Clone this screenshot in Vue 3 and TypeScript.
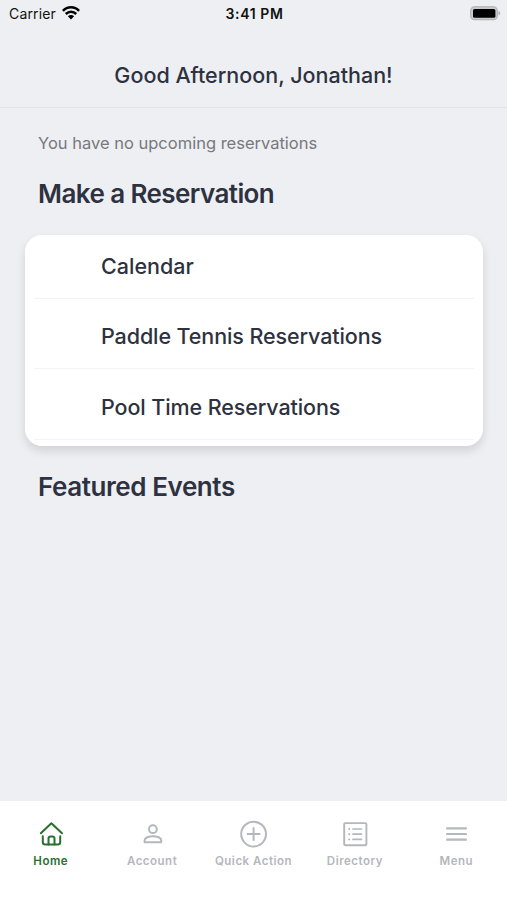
<script setup lang="ts">
type IconName = 'home' | 'account' | 'action' | 'directory' | 'menu'

interface Tab {
  label: string
  icon: IconName
}

const reservations: string[] = ['Calendar', 'Paddle Tennis Reservations', 'Pool Time Reservations']

const tabs: Tab[] = [
  { label: 'Home', icon: 'home' },
  { label: 'Account', icon: 'account' },
  { label: 'Quick Action', icon: 'action' },
  { label: 'Directory', icon: 'directory' },
  { label: 'Menu', icon: 'menu' },
]

const activeTab = 'Home'
</script>

<template>
  <div class="screen">
    <div class="status">
      <div class="carrier">
        <span>Carrier</span>
        <svg class="wifi" width="18" height="14" viewBox="0 0 18 14" fill="none" stroke="#000" stroke-width="2.5">
          <path d="M0.9 4.9C5.4.1 12.6.1 17.1 4.9" />
          <path d="M3.8 8C6.8 5 11.2 5 14.2 8" />
          <path d="M9 13.4L5.9 10.3C7.6 8.6 10.4 8.6 12.1 10.3Z" fill="#000" stroke="none" />
        </svg>
      </div>
      <span class="clock">3:41 PM</span>
      <svg class="battery" width="31" height="15" viewBox="0 0 31 15">
        <rect x="0.7" y="0.8" width="26.6" height="13" rx="3.8" fill="#c9cacb" stroke="#afb0b2" stroke-width="1.1" />
        <rect x="3" y="3" width="22.4" height="8.8" rx="1.6" fill="#000" />
        <path d="M28.5 5.1C30.7 5.7 30.7 8.9 28.5 9.5Z" fill="#afb0b2" />
      </svg>
    </div>

    <header class="header">
      <h1>Good Afternoon, Jonathan!</h1>
    </header>

    <main class="content">
      <p class="notice">You have no upcoming reservations</p>
      <h2 class="reserve-title">Make a Reservation</h2>
      <ul class="card">
        <li v-for="item in reservations" :key="item"><span>{{ item }}</span></li>
      </ul>
      <h2>Featured Events</h2>
    </main>

    <nav class="tabs">
      <a v-for="tab in tabs" :key="tab.label" class="tab" :class="{ active: tab.label === activeTab }">
        <svg width="28" height="28" viewBox="0 0 28 28" fill="none" stroke="currentColor" stroke-width="2" stroke-linecap="round" stroke-linejoin="round">
          <g v-if="tab.icon === 'home'">
            <path d="M3.8 13.3L14.4 3.3L25 13.3" />
            <path d="M5.8 16.2V22.3Q5.8 24.6 8.1 24.6H20.9Q23.2 24.6 23.2 22.3V16.2" />
            <path d="M11.5 24.6V18.7Q11.5 16.4 13.8 16.4H15.2Q17.5 16.4 17.5 18.7V24.6" />
          </g>
          <g v-else-if="tab.icon === 'account'">
            <circle cx="14.9" cy="9.2" r="3.9" />
            <path d="M6.6 22.2V20.3C6.6 17.7 10.7 16.2 14.9 16.2S23.2 17.7 23.2 20.3V22.2Z" />
          </g>
          <g v-else-if="tab.icon === 'action'">
            <circle cx="14.6" cy="14.1" r="12.4" />
            <path d="M8.6 14.1H20.6M14.6 8.1V20.1" />
          </g>
          <g v-else-if="tab.icon === 'directory'" stroke-width="1.9">
            <rect x="3.2" y="3.1" width="22.2" height="22.2" rx="1" />
            <path d="M12 9H20.5M12 14.2H20.5M12 19.4H20.5" stroke-width="1.7" />
            <path d="M8.1 9H8.3M8.1 14.2H8.3M8.1 19.4H8.3" />
          </g>
          <g v-else stroke-width="2.1" stroke-linecap="butt">
            <path d="M4.2 8.4H24.8M4.2 14H24.8M4.2 19.6H24.8" />
          </g>
        </svg>
        <span>{{ tab.label }}</span>
      </a>
    </nav>
  </div>
</template>

<style>
body {
  margin: 0;
}
</style>

<style scoped>
.screen {
  box-sizing: border-box;
  display: flex;
  flex-direction: column;
  height: 900px;
  overflow: hidden;
  background: #edeff3;
  color: #2e3240;
  font-family: Inter, "Liberation Sans", sans-serif;
}
.status {
  box-sizing: border-box;
  display: grid;
  grid-template-columns: 1fr auto 1fr;
  align-items: center;
  height: 28px;
  padding: 0 6px 2px 9px;
  color: #111;
  font-size: 14px;
}
.carrier {
  display: flex;
  align-items: center;
  gap: 6px;
  letter-spacing: 0.15px;
}
.wifi {
  margin-top: -1px;
}
.clock {
  padding-right: 1px;
  font-weight: 600;
  letter-spacing: 0.6px;
}
.battery {
  justify-self: end;
}
.header {
  box-sizing: border-box;
  height: 80px;
  padding-top: 31px;
  border-bottom: 1px solid #e2e4e7;
  text-align: center;
}
h1,
h2,
p,
ul {
  margin: 0;
  padding: 0;
}
h1 {
  font-size: 21.5px;
  line-height: 32px;
  font-weight: 500;
}
.content {
  flex: 1;
  padding: 23px 24px 0 25px;
}
.notice {
  padding-left: 13px;
  color: #77797c;
  font-size: 16.5px;
  line-height: 24px;
}
h2 {
  padding-left: 13px;
  font-size: 26px;
  line-height: 36px;
  font-weight: 600;
  letter-spacing: -0.42px;
}
.reserve-title {
  margin: 21px 0 23px;
  letter-spacing: -0.58px;
}
.card {
  box-sizing: border-box;
  height: 210.5px;
  margin-bottom: 23.5px;
  padding: 0 9px;
  border-radius: 17px;
  background: #fff;
  box-shadow: 0 5px 10px rgba(0, 0, 0, 0.12);
  list-style: none;
}
.card li {
  box-sizing: border-box;
  display: flex;
  align-items: center;
  height: 70.4px;
  padding: 5px 0 0 67px;
  border-bottom: 1.5px solid #f4f4f5;
  font-size: 21.5px;
  font-weight: 500;
  letter-spacing: -0.1px;
}
.card li:first-child {
  height: 64px;
  padding-top: 0;
  padding-bottom: 2px;
  letter-spacing: 0;
}
.tabs {
  box-sizing: border-box;
  display: grid;
  grid-template-columns: repeat(5, 1fr);
  height: 99px;
  padding-top: 19px;
  background: #fff;
}
.tab {
  display: flex;
  flex-direction: column;
  align-items: center;
  gap: 5px;
  color: #b5b7bd;
  font-size: 11.5px;
  line-height: 16px;
  font-weight: 600;
  letter-spacing: 0.5px;
  white-space: nowrap;
}
.active {
  color: #27702f;
}
</style>
